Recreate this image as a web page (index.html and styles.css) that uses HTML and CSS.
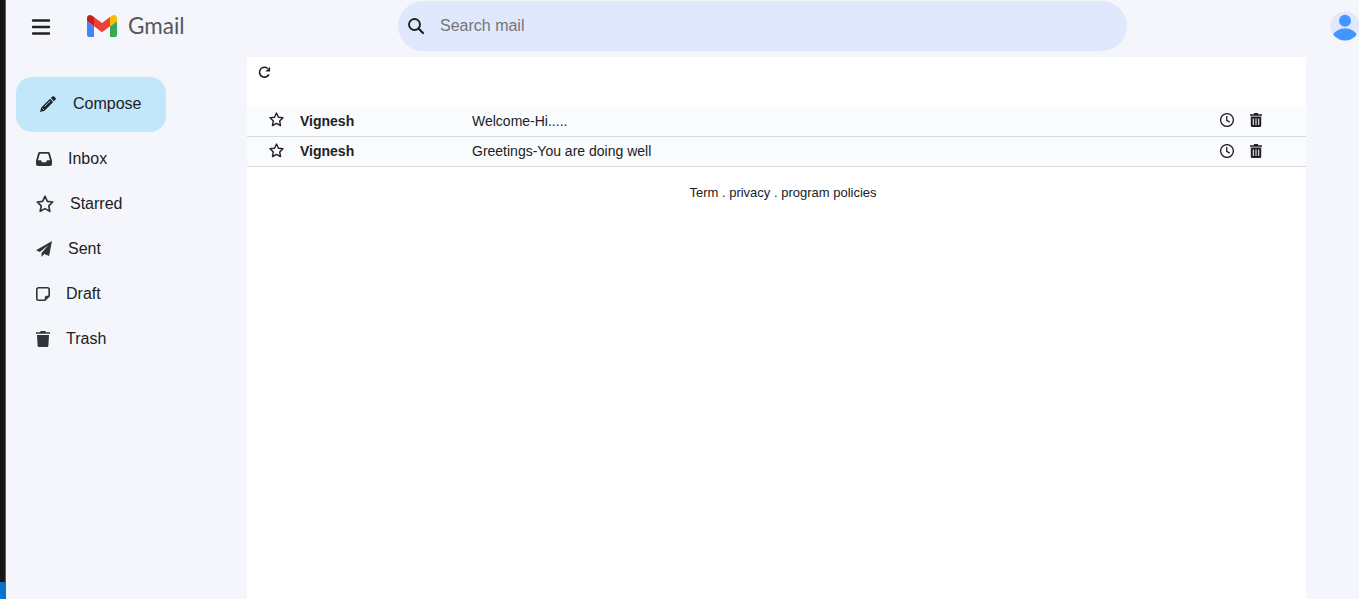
FILE: index.html
```html
<!DOCTYPE html>
<html lang="en">
<head>
<meta charset="utf-8">
<title>Gmail</title>
<link rel="stylesheet" href="styles.css">
</head>
<body>
<svg class="defs" aria-hidden="true">
  <symbol id="star" viewBox="0 0 16 16"><path d="M8 1.100l2.100 4.500 4.800.6-3.500 3.400.9 4.900L8 12.100l-4.300 2.400.9-4.900L1.100 6.200l4.800-.6z" fill="none" stroke="currentColor" stroke-width="1.500" stroke-linejoin="round"/></symbol>
  <symbol id="clock" viewBox="0 0 16 16"><circle cx="8" cy="8" r="7.300" fill="none" stroke="currentColor" stroke-width="1.500"/><path d="M7.700 3.400v5.100l3.400 2" fill="none" stroke="currentColor" stroke-width="1.500"/></symbol>
  <symbol id="bin" viewBox="0 0 12 14"><path d="M0 1.200h3.600L4.200 0h3.600l.6 1.200H12v1.600H0z" fill="currentColor"/><path fill-rule="evenodd" d="M.8 3.500h10.400v9.200q0 1.300-1.300 1.300H2.100Q.8 14 .8 12.700zM2.800 5.500v6.500h1V5.500zM5.500 5.500v6.500h1V5.500zM8.200 5.500v6.500h1V5.500z" fill="currentColor"/></symbol>
</svg>
<div class="shell">
  <div class="edge"></div>
  <div class="app">
    <header class="header">
      <svg class="menu" viewBox="0 0 18 16"><path d="M1 1.500h16M1 8h16M1 14.500h16" stroke="currentColor" stroke-width="2.400" stroke-linecap="round"/></svg>
      <svg class="logo" viewBox="0 0 30 22">
        <path d="M0 6l7 5.200V22H2q-2 0-2-2z" fill="#4285f4"/>
        <path d="M30 6l-7 5.200V22h5q2 0 2-2z" fill="#34a853"/>
        <path d="M7 2l8 6 8-6v9.200l-8 6-8-6z" fill="#ea4335"/>
        <path d="M0 6V3C0 .2 3.200-1 5.500.9L7 2v9.200L0 6z" fill="#c5221f"/>
        <path d="M30 6V3c0-2.800-3.200-4-5.500-2.100L23 2v9.200L30 6z" fill="#fbbc04"/>
      </svg>
      <span class="brand">Gmail</span>
      <div class="search">
        <svg class="lens" viewBox="0 0 16 16"><circle cx="6.500" cy="6.500" r="5.500" fill="none" stroke="currentColor" stroke-width="1.900"/><path d="M10.500 10.500l4.500 4.500" stroke="currentColor" stroke-width="2.200" stroke-linecap="round"/></svg>
        <span>Search mail</span>
      </div>
      <svg class="avatar" viewBox="0 0 30 30"><defs><clipPath id="disc"><circle cx="15" cy="15" r="14.500"/></clipPath></defs><circle cx="15" cy="15" r="14.500" fill="#e1e8fe"/><circle cx="15" cy="9.700" r="6" fill="#4296ff"/><path clip-path="url(#disc)" d="M2.500 24q5-6.800 12.500-6.800T27.500 24L22 30H8z" fill="#4296ff"/></svg>
    </header>
    <div class="body">
      <nav class="sidebar">
        <div class="compose">
          <svg class="pencil" viewBox="0 0 16 16"><path d="M12.500.4q.8-.6 1.500 0l1.600 1.600q.7.800 0 1.500l-1.700 1.700L10.800 2zM10 2.800l3.200 3.200-8.700 8.700L0 16l1.300-4.500z" fill="currentColor"/><path d="M4.600 10.600l5.600-5.600M2.300 12.300l1.500 1.500" stroke="#c2e7fb" stroke-width=".9"/></svg>
          <span>Compose</span>
        </div>
        <div class="item"><svg class="w16" viewBox="0 0 16 14"><path fill-rule="evenodd" d="M3.500 0h9q1 0 1.300 1L16 8.500V12q0 2-2 2H2q-2 0-2-2V8.500L2.200 1Q2.500 0 3.500 0zM3.900 1.700L2 8.300h3l1 2h4l1-2h3l-1.900-6.600z" fill="currentColor"/></svg><span>Inbox</span></div>
        <div class="item"><svg class="w18"><use href="#star"/></svg><span>Starred</span></div>
        <div class="item"><svg class="w16" viewBox="0 0 16 16"><path d="M16 0L0 9.200l3.800 1.700L12.500 4l-7 8v4l2.700-3 4.900 1.900z" fill="currentColor"/></svg><span>Sent</span></div>
        <div class="item"><svg class="w14" viewBox="0 0 14 14"><path d="M8.800 13.200H2.500Q.8 13.200.8 11.500v-9Q.8.800 2.500.8h9q1.700 0 1.700 1.700v6.300z" fill="none" stroke="currentColor" stroke-width="1.600"/><path d="M8.800 13.500V10.500q0-1.700 1.700-1.700h3z" fill="currentColor"/></svg><span>Draft</span></div>
        <div class="item"><svg class="w14" viewBox="0 0 14 16"><path d="M0 1.200h4L4.700 0h4.600L10 1.200h4v1.600H0zM1 4h12l-.6 10.500Q12.300 16 11 16H3q-1.300 0-1.400-1.500z" fill="currentColor"/></svg><span>Trash</span></div>
      </nav>
      <main class="mail">
        <div class="toolbar"><svg class="refresh" viewBox="0 0 14 14"><path d="M10.400 2.700A5.300 5.300 0 1 0 11.700 9" fill="none" stroke="currentColor" stroke-width="1.700"/><path d="M13 .8v5H8z" fill="currentColor"/></svg></div>
        <div class="row first"><svg class="star"><use href="#star"/></svg><b class="from">Vignesh</b><span class="subject">Welcome-Hi.....</span><svg class="clock"><use href="#clock"/></svg><svg class="bin"><use href="#bin"/></svg></div>
        <div class="row"><svg class="star"><use href="#star"/></svg><b class="from">Vignesh</b><span class="subject">Greetings-You are doing well</span><svg class="clock"><use href="#clock"/></svg><svg class="bin"><use href="#bin"/></svg></div>
        <footer class="footer">Term . privacy . program policies</footer>
      </main>
    </div>
  </div>
</div>
</body>
</html>
```
FILE: styles.css
```css
* { box-sizing: border-box; }
body { margin: 0; overflow: hidden; font-family: "Liberation Sans", Arial, sans-serif; color: #202124; background: #f4f6fb; }
svg { display: block; flex: none; overflow: visible; }
.defs { display: none; }
.shell { display: flex; height: 599px; }
.edge { width: 6px; flex: none; border-right: 1px solid #1874bd; background: linear-gradient(#161616 582px, #0873cf 582px); }
.app { flex: 1; min-width: 0; display: flex; flex-direction: column; }
.header { height: 57px; display: flex; align-items: center; padding: 0 0 5px 26px; }
.menu { width: 18px; height: 16px; margin-top: 1px; }
.logo { width: 30px; height: 22px; margin-left: 37px; }
.brand { flex: none; width: 58px; margin-left: 11px; font: 22.5px/30px Lato, sans-serif; color: #55585b; }
.search { flex: none; width: 729px; height: 50px; margin-left: 212px; padding-left: 10px; display: flex; align-items: center; gap: 16px; border-radius: 25px; background: #e0e8fe; font-size: 16px; color: #757575; }
.search span { line-height: 20px; margin-bottom: 1px; }
.lens { width: 16px; height: 16px; color: #202124; }
.avatar { width: 30px; height: 30px; margin-left: 203px; }
.body { flex: 1; display: flex; }
.sidebar { width: 241px; padding: 20px 0 0 10px; font-size: 16px; }
.compose { width: 150px; height: 55px; margin-bottom: 4px; padding-left: 24px; display: flex; align-items: center; gap: 17px; border-radius: 16px; background: #c2e7fb; }
.compose span { line-height: 20px; margin-bottom: 1px; }
.item span { line-height: 20px; margin-top: 1px; }
.pencil { width: 16px; height: 16px; margin-bottom: 1px; }
.item { height: 45px; padding-left: 20px; display: flex; align-items: center; gap: 16px; }
.item svg { color: #303337; }
.w16 { width: 16px; height: 16px; }
.w14 { width: 14px; height: 16px; }
.w18 { width: 18px; height: 18px; }
.mail { width: 1059px; background: #fff; }
.toolbar { height: 50px; padding: 9px 0 0 11px; }
.refresh { width: 13px; height: 13px; }
.row { height: 30px; padding: 0 44px 2px 22px; display: flex; align-items: center; border-bottom: 1px solid #d8dadd; background: #fafbfd; font-size: 14px; }
.first svg { margin-bottom: 2px; }
.star { width: 15px; height: 15px; }
.from { width: 172px; margin-left: 16px; }
.subject { flex: 1; }
.clock { width: 14px; height: 14px; }
.bin { width: 12px; height: 14px; margin-left: 16px; }
.footer { padding: 18px 0 0 13px; font-size: 13px; line-height: 15px; text-align: center; }
```
